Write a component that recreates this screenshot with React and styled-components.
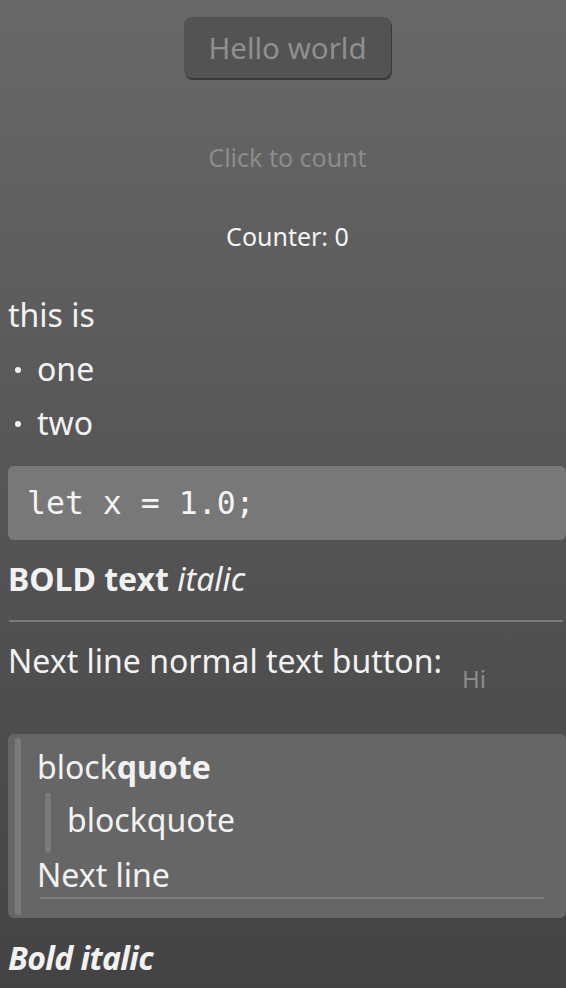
import React, { useState } from 'react'
import styled, { createGlobalStyle } from 'styled-components'

const Global = createGlobalStyle`
html, body {
  margin: 0;
  padding: 0;
}
body {
  width: 566px;
  height: 988px;
  overflow: hidden;
  background: linear-gradient(to bottom, #686868 0%, #434343 100%);
  font-family: "Noto Sans", "Open Sans", sans-serif;
  color: #f2f2f2;
}
`

export default function App() {
  const [count, setCount] = useState(0)

  return (
    <Page>
      <Global />
      <Top>
        <HelloBtn onClick={() => setCount(count + 1)}>Hello world</HelloBtn>
        <Hint>Click to count</Hint>
        <Counter>Counter: {count}</Counter>
      </Top>

      <Para $top={39}>this is</Para>
      <Item>one</Item>
      <Item>two</Item>

      <Code>let x = 1.0;</Code>

      <Para $top={17}>
        <B>BOLD text</B> <I>italic</I>
      </Para>

      <Rule />

      <Row>
        Next line normal text button:
        <SmallBtn>Hi</SmallBtn>
      </Row>

      <Quote>
        <QLine>
          block<B>quote</B>
        </QLine>
        <Nested>
          <QLine>blockquote</QLine>
        </Nested>
        <QLine>Next line</QLine>
        <InnerRule />
      </Quote>

      <Para $top={18}>
        <BI>Bold italic</BI>
      </Para>
    </Page>
  )
}

const Page = styled.div`
display: flex;
flex-direction: column;
padding: 0 0 0 8px;
`;
const Top = styled.div`
display: flex;
flex-direction: column;
align-items: center;
width: 559px;
padding-top: 17px;
`;
const HelloBtn = styled.button`
font-family: inherit;
font-size: 29.5px;
color: #8f8f8f;
background: #535353;
border: none;
border-radius: 8px;
width: 207px;
height: 61px;
padding: 0;
box-shadow: 1px 2px 0 #393939;
cursor: pointer;
`;
const Hint = styled.div`
margin-top: 61px;
font-size: 25px;
line-height: 36px;
color: #8c8c8c;
`;
const Counter = styled.div`
margin-top: 43px;
font-size: 25px;
line-height: 36px;
color: #f4f4f4;
`;
const Para = styled.div`
font-size: 32px;
line-height: 44px;
margin-top: ${p => p.$top || 10}px;
`;
const Item = styled.div`
font-size: 32px;
line-height: 44px;
margin-top: 10px;
display: flex;
align-items: center;
&::before {
  content: '';
  width: 6px;
  height: 6px;
  border-radius: 50%;
  background: #f2f2f2;
  margin: 2px 16px 0 7px;
}
`;
const Code = styled.pre`
margin: 21px 0 0 0;
background: #787878;
border-radius: 6px;
padding: 15px 19px;
font-family: "DejaVu Sans Mono", "Liberation Mono", monospace;
font-size: 31.5px;
line-height: 44px;
color: #f4f4f4;
`;
const B = styled.b`
font-weight: 700;
`;
const I = styled.i`
font-style: italic;
`;
const BI = styled.b`
font-weight: 700;
font-style: italic;
letter-spacing: -0.6px;
`;
const Rule = styled.div`
height: 2px;
background: #7a7a7a;
margin: 19px 3px 0 1px;
`;
const Row = styled.div`
display: flex;
align-items: flex-start;
font-size: 32px;
line-height: 44px;
margin-top: 17px;
height: 79px;
`;
const SmallBtn = styled.button`
font-family: inherit;
font-size: 24px;
line-height: 34px;
color: #8c8c8c;
background: none;
border: none;
padding: 0;
margin: 23px 0 0 20px;
`;
const Quote = styled.div`
margin-top: 16px;
background: #666666;
border-radius: 6px;
padding: 11px 22px 19px 29px;
position: relative;
&::before {
  content: '';
  position: absolute;
  left: 7px;
  top: 4px;
  bottom: 3px;
  width: 6px;
  border-radius: 3px;
  background: #7b7b7b;
}
`;
const QLine = styled.div`
font-size: 32px;
line-height: 44px;
`;
const Nested = styled.div`
display: flex;
margin: 4px 0 0 8px;
padding: 5px 0 11px 22px;
position: relative;
&::before {
  content: '';
  position: absolute;
  left: 0;
  top: 0;
  bottom: 0;
  width: 6px;
  border-radius: 3px;
  background: #7b7b7b;
}
`;
const InnerRule = styled.div`
height: 2px;
background: #7f7f7f;
margin: 0 0 0 3px;
`;
